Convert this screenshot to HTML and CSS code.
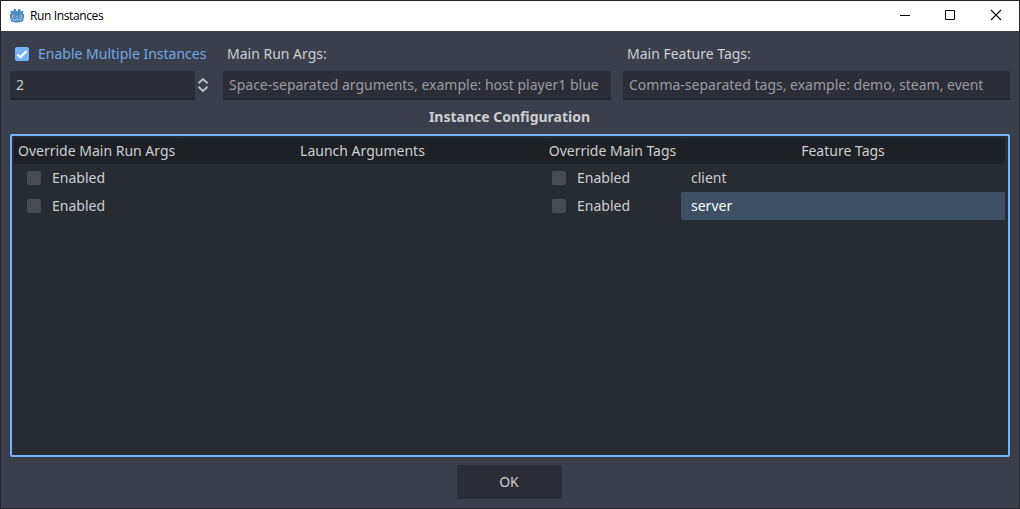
FILE: index.html
```html
<!DOCTYPE html>
<html lang="en">
<head>
<meta charset="utf-8">
<title>Run Instances</title>
<link rel="stylesheet" href="styles.css">
</head>
<body>
<div class="window">
  <header class="titlebar">
    <svg class="logo" width="16" height="16" viewBox="0 0 16 16">
      <path fill="#4a8cc4" d="M5.500 1h1.500v2h2V1h1.500l1 .5V3l1 .5 1-1 1.300 1.300-.8 1.200V6H15v4h-.5v2.500C13 14 11 14.500 8 14.500S3 14 1.500 12.500V10H1V6h1V5l-.8-1.200L2.500 2.500l1 1 1-.5V1.500z"/>
      <rect x="3" y="6.800" width="3" height="2.600" rx="1" fill="#c5d9ea"/><rect x="10" y="6.800" width="3" height="2.600" rx="1" fill="#c5d9ea"/>
      <rect x="4" y="7.300" width="1.500" height="1.500" fill="#4c5966"/><rect x="10.500" y="7.300" width="1.500" height="1.500" fill="#4c5966"/>
      <path d="M8 7.800v2M2.500 10.900l2 .3v1h2v-.8h3v.8h2v-1l2-.3" fill="none" stroke="#b9d2e7" stroke-width=".8"/>
    </svg>
    <span class="title">Run Instances</span>
    <div class="controls">
      <svg width="46" height="30" viewBox="0 0 46 30"><path d="M18 14.500h10" stroke="#000"/></svg>
      <svg width="46" height="30" viewBox="0 0 46 30"><path d="M17.500 9.500h9v9h-9z" fill="none" stroke="#000"/></svg>
      <svg width="46" height="30" viewBox="0 0 46 30"><path d="M17 9l10 10M27 9l-10 10" stroke="#000" stroke-width="1.100"/></svg>
    </div>
  </header>
  <main class="content">
    <div class="options">
      <div class="option">
        <label class="label enable">
          <svg width="14" height="14" viewBox="0 0 14 14"><rect width="14" height="14" rx="2" fill="#75b4fb"/><path d="M2.500 7.500l3 2.700 6-6.200" fill="none" stroke="#fff" stroke-width="2.200"/></svg>
          <span>Enable Multiple Instances</span>
        </label>
        <div class="spin">
          <div class="field value">2</div>
          <svg width="16" height="16" viewBox="0 0 16 16"><path d="M3.500 6.200L8 2l4.500 4.200M3.500 9.800L8 14l4.500-4.200" fill="none" stroke="#bbbdc0" stroke-width="2"/></svg>
        </div>
      </div>
      <div class="option">
        <div class="label">Main Run Args:</div>
        <div class="field">Space-separated arguments, example: host player1 blue</div>
      </div>
      <div class="option">
        <div class="label">Main Feature Tags:</div>
        <div class="field">Comma-separated tags, example: demo, steam, event</div>
      </div>
    </div>
    <h1 class="heading">Instance Configuration</h1>
    <div class="tree">
      <div class="row head">
        <div>Override Main Run Args</div><div>Launch Arguments</div><div>Override Main Tags</div><div>Feature Tags</div>
      </div>
      <div class="row">
        <div class="check first"><i class="box"></i>Enabled</div><div></div><div class="check"><i class="box"></i>Enabled</div><div class="cell">client</div>
      </div>
      <div class="row">
        <div class="check first"><i class="box"></i>Enabled</div><div></div><div class="check"><i class="box"></i>Enabled</div><div class="cell selected">server</div>
      </div>
    </div>
    <button class="ok">OK</button>
  </main>
</div>
</body>
</html>
```
FILE: styles.css
```css
* { box-sizing: border-box; }
body { margin: 0; font: 14px/20px "Noto Sans", sans-serif; color: #cdcfd2; }
svg { display: block; flex: none; }
.window { width: 1020px; height: 509px; border: 1px solid #25262b; background: #3a3f4b; display: flex; flex-direction: column; }
.titlebar { height: 30px; flex: none; background: #fff; color: #000; display: flex; align-items: center; padding-left: 8px; }
.title { font: 12px/16px "Open Sans", sans-serif; margin-left: 5px; letter-spacing: -0.38px; }
.controls { display: flex; margin-left: auto; margin-right: -1px; }
.content { flex: 1; padding: 9px; display: flex; flex-direction: column; }
.options { display: grid; grid-template-columns: 201px 388px 387px; column-gap: 12px; }
.label { height: 31px; padding: 4px 4px 0; white-space: nowrap; }
.enable { display: flex; align-items: flex-start; gap: 9px; padding-left: 5px; color: #70a9e8; }
.enable svg { margin-top: 3px; }
.field { height: 29px; padding: 4px 6px 0; background: #2b2e37; border-bottom: 2px solid #23262d; border-radius: 2px 2px 0 0; color: #9a9ca2; white-space: nowrap; }
.spin { display: flex; align-items: flex-start; }
.spin svg { margin-top: 6px; }
.value { width: 185px; color: #cdcfd2; }
.heading { margin: 0; height: 34px; padding: 7px 1px 0 0; font-size: 14px; line-height: 20px; font-weight: 700; text-align: center; }
.tree { height: 323px; border: 2px solid #75b4fb; border-radius: 2px; background: #272b32; padding: 2px 3px 2px 2px; }
.row { display: grid; grid-template-columns: 167px 364px 136px 324px; height: 28px; }
.head { height: 26px; line-height: 26px; text-align: center; }
.head > div { background: #1d2024; border-radius: 2px; }
.head > div:not(:last-child) { padding-right: 1px; }
.head > div:first-child { text-align: left; padding-left: 4px; }
.check { display: flex; align-items: center; gap: 11px; padding-left: 7px; }
.first { padding-left: 13px; }
.box { width: 14px; height: 14px; border-radius: 2px; background: #484b54; }
.cell { padding-left: 10px; line-height: 28px; border-radius: 2px; }
.selected { background: #3d4f65; color: #fff; }
.ok { margin: 8px auto 0 447px; width: 105px; height: 34px; border: 0; border-radius: 2px; background: #2b2e37; color: #cdcfd2; font: inherit; padding: 0 1px 0 0; }
```
